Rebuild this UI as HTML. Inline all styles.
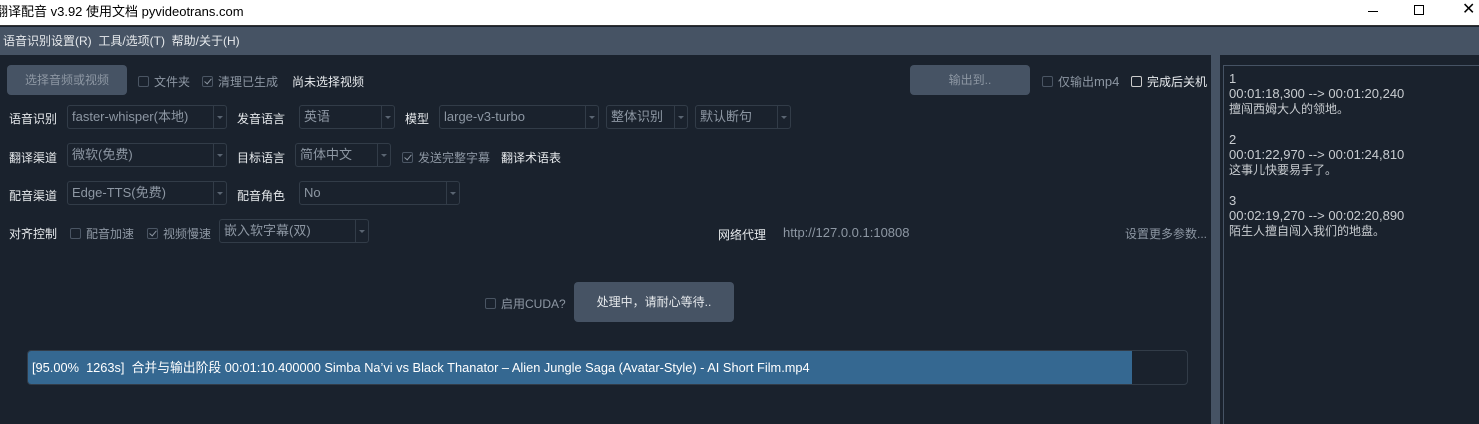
<!DOCTYPE html><html><head><meta charset="utf-8"><style>
*{margin:0;padding:0;box-sizing:border-box}
body{width:1479px;height:424px;overflow:hidden;background:#1a222d;font-family:"Liberation Sans","Noto Sans CJK SC",sans-serif;font-size:12px;color:#e6e9ec;position:relative}
.a{position:absolute;white-space:nowrap}
.title{left:0;top:0;width:1479px;height:26px;background:#fff;border-bottom:1px solid #333;color:#000;font-size:13px;line-height:24px}
.menu{left:0;top:27px;width:1479px;height:28px;background:#465364;line-height:28px;font-size:12px;padding-left:3px}
.btn{background:#465364;border-radius:4px;color:#8d97a3;text-align:center}
.lbl{color:#e6e9ec;font-size:12px}
.dim{color:#8d97a3}
.cb{width:11px;height:11px;border:1px solid #4a5563;border-radius:2px;display:inline-block;vertical-align:-1px;margin-right:5px;position:relative}
.cb.k::after{content:"";position:absolute;left:3px;top:0px;width:3px;height:6px;border:solid #8d97a3;border-width:0 1px 1px 0;transform:rotate(40deg)}
.sel{height:24px;border:1px solid #323c48;border-radius:3px;color:#8d97a3;line-height:22px;padding-left:4px;font-size:13px}
.sel::after{content:"";position:absolute;right:0;top:0;width:12px;height:22px;border-left:1px solid #323c48}
.sel::before{content:"";position:absolute;right:3px;top:10px;border:3px solid transparent;border-top:3px solid #5a6572}
</style></head><body>
<div class="a title"><span class="a" style="left:-5px;top:0">翻译配音 v3.92 使用文档 pyvideotrans.com</span>
<span class="a" style="left:1368px;top:11px;width:10px;border-top:1px solid #000"></span>
<span class="a" style="left:1414px;top:5px;width:10px;height:10px;border:1px solid #000"></span>
<span class="a" style="left:1462px;top:-2px;font-size:16px">✕</span></div>
<div class="a menu">语音识别设置(R)&nbsp; 工具/选项(T)&nbsp; 帮助/关于(H)</div>

<div class="a btn" style="left:7px;top:65px;width:120px;height:30px;line-height:30px">选择音频或视频</div>
<div class="a dim" style="left:138px;top:73px"><span class="cb"></span>文件夹</div>
<div class="a dim" style="left:202px;top:73px"><span class="cb k"></span>清理已生成</div>
<div class="a lbl" style="left:292px;top:73px">尚未选择视频</div>
<div class="a btn" style="left:910px;top:65px;width:120px;height:30px;line-height:30px">输出到..</div>
<div class="a dim" style="left:1042px;top:73px"><span class="cb"></span>仅输出<span style="font-size:13px">mp4</span></div>
<div class="a lbl" style="left:1131px;top:73px"><span class="cb" style="border-color:#ccc"></span>完成后关机</div>

<div class="a lbl" style="left:9px;top:110px">语音识别</div>
<div class="a sel" style="left:67px;top:105px;width:160px">faster-whisper(本地)</div>
<div class="a lbl" style="left:237px;top:110px">发音语言</div>
<div class="a sel" style="left:299px;top:105px;width:96px">英语</div>
<div class="a lbl" style="left:405px;top:110px">模型</div>
<div class="a sel" style="left:439px;top:105px;width:160px">large-v3-turbo</div>
<div class="a sel" style="left:606px;top:105px;width:82px">整体识别</div>
<div class="a sel" style="left:695px;top:105px;width:96px">默认断句</div>

<div class="a lbl" style="left:9px;top:149px">翻译渠道</div>
<div class="a sel" style="left:67px;top:143px;width:160px">微软(免费)</div>
<div class="a lbl" style="left:237px;top:149px">目标语言</div>
<div class="a sel" style="left:295px;top:143px;width:96px">简体中文</div>
<div class="a dim" style="left:402px;top:149px"><span class="cb k"></span>发送完整字幕</div>
<div class="a lbl" style="left:501px;top:149px">翻译术语表</div>

<div class="a lbl" style="left:9px;top:187px">配音渠道</div>
<div class="a sel" style="left:67px;top:181px;width:160px">Edge-TTS(免费)</div>
<div class="a lbl" style="left:237px;top:187px">配音角色</div>
<div class="a sel" style="left:299px;top:181px;width:161px">No</div>

<div class="a lbl" style="left:9px;top:225px">对齐控制</div>
<div class="a dim" style="left:70px;top:225px"><span class="cb"></span>配音加速</div>
<div class="a dim" style="left:147px;top:225px"><span class="cb k"></span>视频慢速</div>
<div class="a sel" style="left:219px;top:219px;width:150px">嵌入软字幕(双)</div>
<div class="a lbl" style="left:718px;top:226px">网络代理</div>
<div class="a dim" style="left:783px;top:225px;font-size:13px">http://127.0.0.1:10808</div>
<div class="a dim" style="left:1125px;top:225px">设置更多参数...</div>

<div class="a dim" style="left:485px;top:295px"><span class="cb"></span>启用CUDA?</div>
<div class="a btn" style="left:574px;top:282px;width:160px;height:40px;line-height:40px;color:#e6e9ec">处理中，请耐心等待..</div>

<div class="a" style="left:27px;top:350px;width:1161px;height:35px;border:1px solid #323c48;border-radius:4px;overflow:hidden">
<div style="width:1104px;height:100%;background:#356891;line-height:33px;padding-left:4px;color:#fff;font-size:12.8px">[95.00%&nbsp; 1263s]&nbsp; 合并与输出阶段 00:01:10.400000 Simba Na’vi vs Black Thanator – Alien Jungle Saga (Avatar-Style) - AI Short Film.mp4</div></div>

<div class="a" style="left:1211px;top:55px;width:9px;height:369px;background:#465364"></div>
<div class="a" style="left:1223px;top:65px;width:256px;height:359px;border:1px solid #465364;border-right:none;border-bottom:none;padding:5px 0 0 5px;line-height:15px;color:#c8ccd0;font-size:13px">
1<br>00:01:18,300 --&gt; 00:01:20,240<br><span style="font-size:12px">擅闯西姆大人的领地。</span><br><br>2<br>00:01:22,970 --&gt; 00:01:24,810<br><span style="font-size:12px">这事儿快要易手了。</span><br><br>3<br>00:02:19,270 --&gt; 00:02:20,890<br><span style="font-size:12px">陌生人擅自闯入我们的地盘。</span></div>
</body></html>
